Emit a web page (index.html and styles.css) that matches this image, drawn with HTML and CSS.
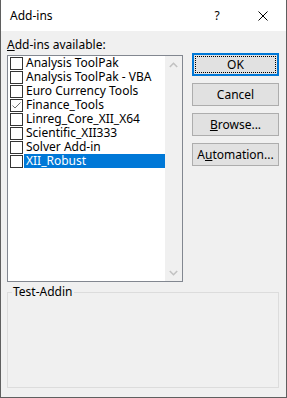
FILE: index.html
```html
<!DOCTYPE html>
<html>
<head>
<meta charset="utf-8">
<link rel="stylesheet" href="styles.css">
</head>
<body>
<div class="window">
  <div class="titlebar">
    <span class="title">Add-ins</span>
    <span class="help">?</span>
    <span class="close">
      <svg width="10" height="10" viewBox="0 0 10 10"><path d="M0.5 0.5 L9.5 9.5 M9.5 0.5 L0.5 9.5" stroke="#000" stroke-width="1" fill="none"/></svg>
    </span>
  </div>
  <div class="content">
    <div class="main">
      <div class="left">
        <div class="label"><u>A</u>dd-ins available:</div>
        <div class="listbox">
          <div class="items">
            <div class="row"><span class="cb"></span><span class="txt">Analysis ToolPak</span></div>
            <div class="row"><span class="cb"></span><span class="txt">Analysis ToolPak - VBA</span></div>
            <div class="row"><span class="cb"></span><span class="txt">Euro Currency Tools</span></div>
            <div class="row"><span class="cb"><svg width="11" height="11" viewBox="0 0 11 11"><path d="M1.5 5.5 L4 8 L9.5 2.5" stroke="#6e6e6e" stroke-width="1" fill="none"/></svg></span><span class="txt">Finance_Tools</span></div>
            <div class="row"><span class="cb"></span><span class="txt">Linreg_Core_XII_X64</span></div>
            <div class="row"><span class="cb"></span><span class="txt">Scientific_XII333</span></div>
            <div class="row"><span class="cb"></span><span class="txt">Solver Add-in</span></div>
            <div class="row selected"><span class="cb"></span><span class="txt">XII_Robust</span></div>
          </div>
          <div class="scrollbar">
            <div class="arrow"><svg width="9" height="6" viewBox="0 0 9 6"><path d="M0.8 5 L4.5 1.3 L8.2 5" stroke="#c2c2c2" stroke-width="1.6" fill="none"/></svg></div>
            <div class="track"></div>
            <div class="arrow"><svg width="9" height="6" viewBox="0 0 9 6"><path d="M0.8 1 L4.5 4.7 L8.2 1" stroke="#c2c2c2" stroke-width="1.6" fill="none"/></svg></div>
          </div>
        </div>
      </div>
      <div class="buttons">
        <div class="btn default"><span class="focus">OK</span></div>
        <div class="btn">Cancel</div>
        <div class="btn"><span><u>B</u>rowse...</span></div>
        <div class="btn"><span>A<u>u</u>tomation...</span></div>
      </div>
    </div>
    <fieldset class="group">
      <legend>Test-Addin</legend>
    </fieldset>
  </div>
</div>
</body>
</html>
```
FILE: styles.css
```css
html, body {
  margin: 0;
  padding: 0;
}
body {
  width: 287px;
  height: 398px;
  font-family: "Noto Sans", "Open Sans", sans-serif;
  font-size: 12px;
  color: #000;
}
.window {
  box-sizing: border-box;
  width: 287px;
  height: 398px;
  border-left: 1px solid #5f5f5f;
  border-right: 1px solid #5f5f5f;
  border-bottom: 1px solid #5f5f5f;
  display: flex;
  flex-direction: column;
  background: #f0f0f0;
}
.titlebar {
  height: 31px;
  background: #fff;
  display: flex;
  align-items: center;
  flex: none;
}
.title {
  margin-left: 9px;
  font-size: 12px;
  flex: 1;
}
.help {
  width: 12px;
  text-align: center;
  font-size: 12px;
  margin-right: 35px;
}
.close {
  width: 10px;
  height: 10px;
  margin-right: 18px;
  display: flex;
}
.content {
  flex: 1;
  display: flex;
  flex-direction: column;
  padding: 0 7px 9px 6px;
}
.main {
  display: flex;
}
.left {
  width: 176px;
  display: flex;
  flex-direction: column;
}
.label {
  height: 18px;
  margin-top: 6px;
  line-height: 16px;
}
.listbox {
  box-sizing: border-box;
  height: 227px;
  border: 1px solid #828790;
  background: #fff;
  display: flex;
}
.items {
  flex: 1;
  display: flex;
  flex-direction: column;
}
.row {
  height: 14px;
  display: flex;
  line-height: 14px;
}
.cb {
  box-sizing: border-box;
  width: 13px;
  height: 13px;
  margin: 1px 1px 0 2px;
  border: 1px solid #333;
  background: #fff;
  display: flex;
}
.txt {
  flex: 1;
  padding-left: 2px;
  white-space: nowrap;
}
.selected .txt {
  background: #0078d7;
  color: #fff;
}
.scrollbar {
  width: 17px;
  background: #f0f0f0;
  display: flex;
  flex-direction: column;
}
.arrow {
  height: 17px;
  display: flex;
  align-items: center;
  justify-content: center;
}
.track {
  flex: 1;
}
.buttons {
  margin-left: 9px;
  padding-top: 22px;
  display: flex;
  flex-direction: column;
  gap: 7px;
}
.btn {
  box-sizing: border-box;
  width: 87px;
  height: 23px;
  border: 1px solid #adadad;
  background: #e1e1e1;
  display: flex;
  align-items: center;
  justify-content: center;
}
.btn.default {
  border: 2px solid #0078d7;
  padding: 1px;
}
.focus {
  box-sizing: border-box;
  width: 100%;
  height: 100%;
  border: 1px dotted #000;
  display: flex;
  align-items: center;
  justify-content: center;
}
.group {
  flex: 1;
  margin: 3px 0 0 0;
  padding: 0;
  border: 1px solid #dcdcdc;
  min-width: 0;
}
.group legend {
  margin-left: 4px;
  padding: 0 1px;
  line-height: 14px;
}
```
